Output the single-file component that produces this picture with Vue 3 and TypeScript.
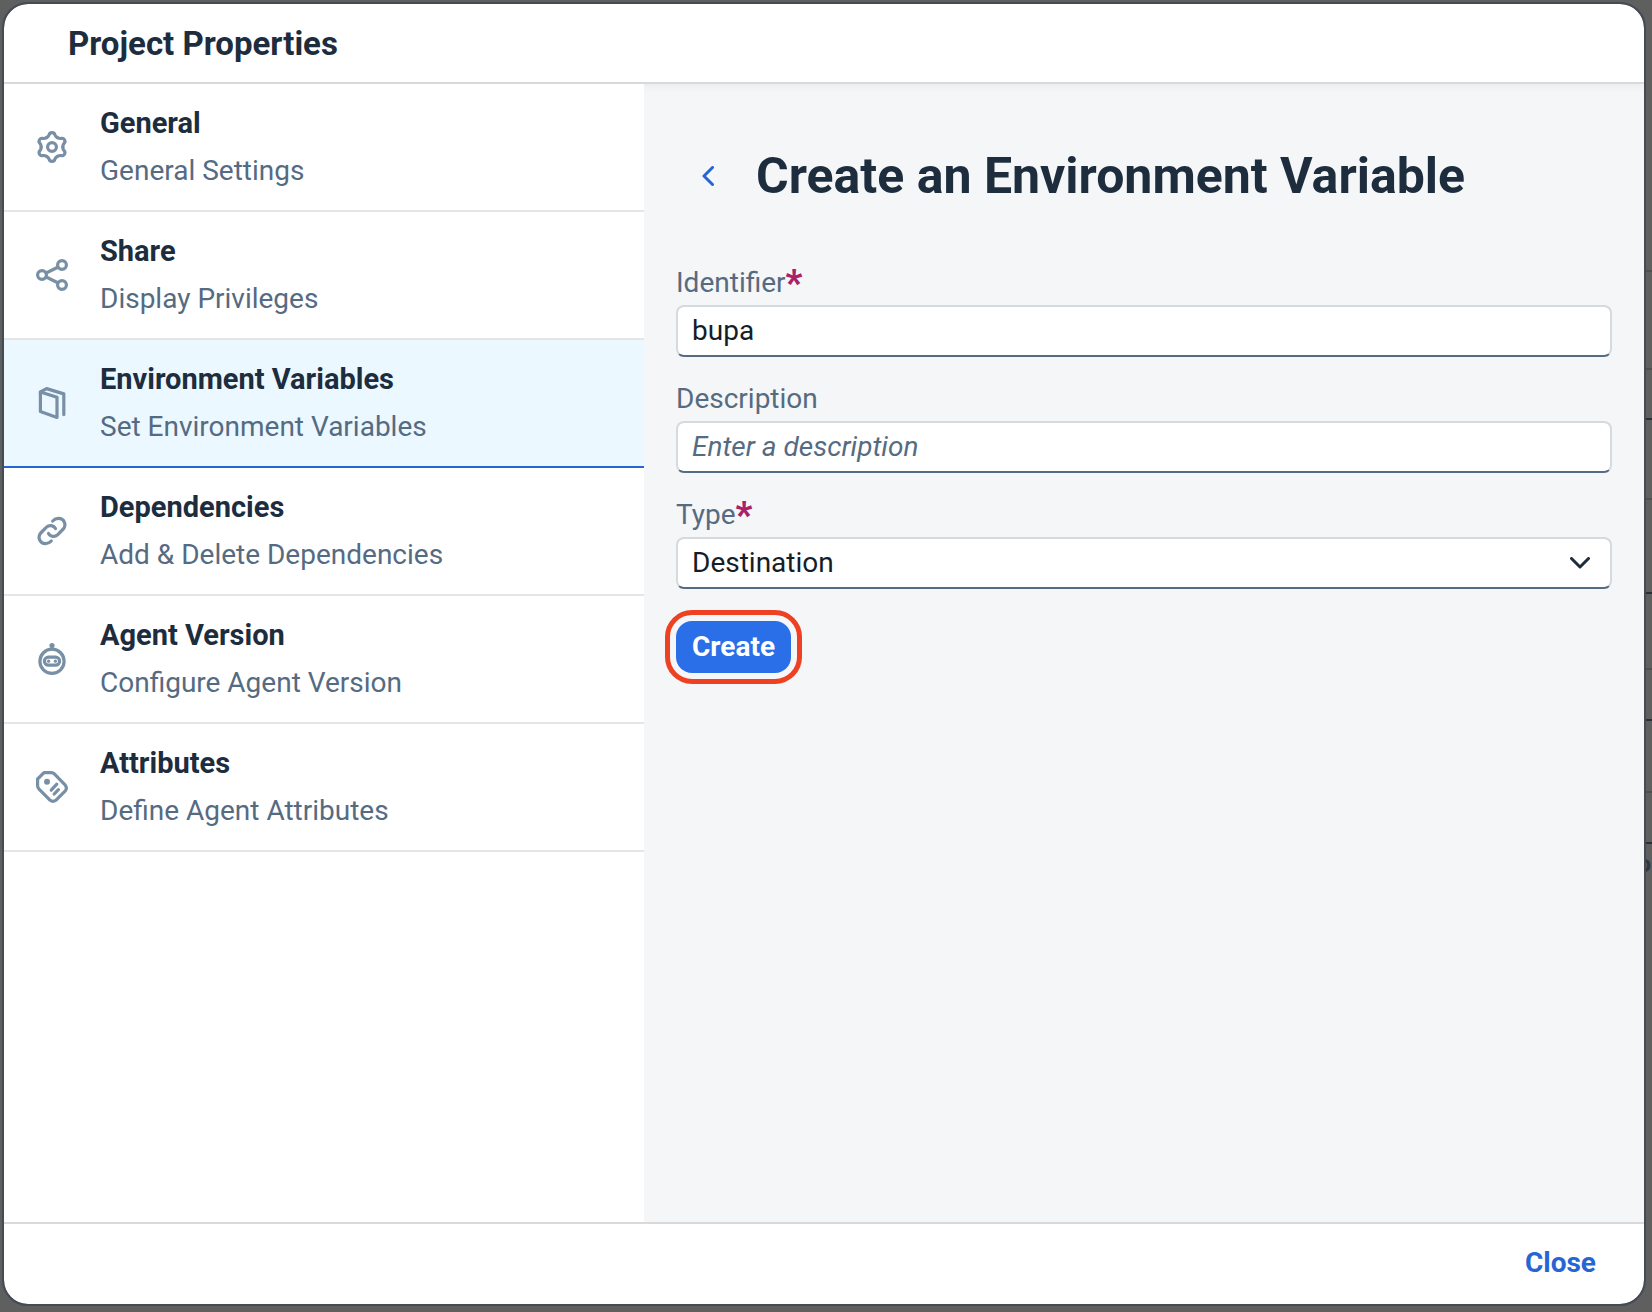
<script setup lang="ts">
import { ref } from 'vue'

interface Section {
  id: string
  title: string
  subtitle: string
}

interface Block {
  height: number
  dark: boolean
}

const sections: Section[] = [
  { id: 'general', title: 'General', subtitle: 'General Settings' },
  { id: 'share', title: 'Share', subtitle: 'Display Privileges' },
  { id: 'environment', title: 'Environment Variables', subtitle: 'Set Environment Variables' },
  { id: 'dependencies', title: 'Dependencies', subtitle: 'Add & Delete Dependencies' },
  { id: 'agent', title: 'Agent Version', subtitle: 'Configure Agent Version' },
  { id: 'attributes', title: 'Attributes', subtitle: 'Define Agent Attributes' },
]

// Panels of the page that stays dimmed behind the dialog
const blocks: Block[] = [
  { height: 272, dark: false },
  { height: 98, dark: false },
  { height: 50, dark: true },
  { height: 80, dark: false },
  { height: 94, dark: true },
  { height: 76, dark: false },
  { height: 51, dark: true },
  { height: 72, dark: false },
  { height: 51, dark: true },
]

const gearTurns = [0, 60, 120, 180, 240, 300]
const selected = ref('environment')
const identifier = ref('bupa')
const description = ref('')
const type = ref('Destination')
</script>

<template>
  <div class="screen">
    <div class="underlay" aria-hidden="true">
      <div
        v-for="(b, i) in blocks"
        :key="i"
        class="block"
        :class="{ dark: b.dark }"
        :style="{ height: b.height + 'px' }"
      ></div>
      <div class="behind">o</div>
    </div>

    <section class="dialog" role="dialog" aria-labelledby="dialog-title">
      <header class="dialog-header">
        <h1 id="dialog-title">Project Properties</h1>
      </header>

      <div class="dialog-body">
        <nav class="sections">
          <button
            v-for="s in sections"
            :key="s.id"
            type="button"
            class="section"
            :class="{ selected: s.id === selected }"
            @click="selected = s.id"
          >
            <svg class="icon" viewBox="0 0 32 32" aria-hidden="true">
              <g v-if="s.id === 'general'">
                <path
                  v-for="turn in gearTurns"
                  :key="turn"
                  :transform="`rotate(${turn} 16 16)`"
                  d="M10.6 6.65C12 5.8 12.8 5.2 13.2 3.6C13.6 2 14.2 1.6 16 1.6C17.8 1.6 18.4 2 18.8 3.6C19.2 5.2 20 5.8 21.4 6.65"
                />
                <circle cx="16" cy="16" r="4.4" />
              </g>
              <g v-else-if="s.id === 'share'">
                <circle cx="6" cy="16" r="4.4" />
                <circle cx="26" cy="6" r="4.4" />
                <circle cx="26" cy="26" r="4.4" />
                <path d="M10.2 14L21.8 8.2M10.2 18L21.8 23.8" />
              </g>
              <g v-else-if="s.id === 'environment'">
                <path d="M4.4 5L21 10.3V30.4L4.4 24.6Z" />
                <path d="M4.4 5L10.6 1.6L27.8 6.9V27.6" />
              </g>
              <g v-else-if="s.id === 'dependencies'">
                <path d="M19.5 13.5C17.5 10 13 9.8 10.5 12.2L5.2 17.5C1 21.8 3.5 28.6 9.6 28.6C12 28.6 14 27.4 15.3 26" />
                <path d="M12.5 18.5C14.5 22 19 22.2 21.5 19.8L26.8 14.5C31 10.2 28.5 3.4 22.4 3.4C20 3.4 18 4.6 16.7 6" />
              </g>
              <g v-else-if="s.id === 'agent'">
                <circle cx="16" cy="18.3" r="12.1" />
                <rect x="8.4" y="14.2" width="15.2" height="8" rx="4" />
                <circle class="solid" cx="16" cy="2.6" r="2.6" />
                <circle class="solid" cx="12.6" cy="18.2" r="1.6" />
                <circle class="solid" cx="19.4" cy="18.2" r="1.6" />
              </g>
              <g v-else>
                <path d="M8 1.6H15.4Q17 1.6 18.1 2.7L29.3 14.2Q31.4 17 29.3 19.8L19.8 29.3Q17 31.4 14.2 29.3L2.8 17.8Q1.6 16.4 1.6 14.8V8Z" />
                <path d="M20.8 13.2L15.2 19.2M22.4 18.6L18.2 23" />
                <circle class="solid" cx="11" cy="10.8" r="3" />
              </g>
            </svg>
            <span class="section-text">
              <span class="section-title">{{ s.title }}</span>
              <span class="section-subtitle">{{ s.subtitle }}</span>
            </span>
          </button>
        </nav>

        <main class="detail">
          <div class="detail-heading">
            <button type="button" class="back" aria-label="Back">
              <svg viewBox="0 0 12 20" aria-hidden="true"><path d="M10.5 1.5L2 10L10.5 18.5" /></svg>
            </button>
            <h2>Create an Environment Variable</h2>
          </div>

          <form @submit.prevent>
            <div class="field">
              <label for="identifier">Identifier<span class="required">*</span></label>
              <input id="identifier" v-model="identifier" type="text" required />
            </div>
            <div class="field">
              <label for="description">Description</label>
              <input id="description" v-model="description" type="text" placeholder="Enter a description" />
            </div>
            <div class="field">
              <label for="type">Type<span class="required">*</span></label>
              <div class="select">
                <select id="type" v-model="type" required>
                  <option>Destination</option>
                </select>
                <svg viewBox="0 0 20 12" aria-hidden="true"><path d="M1.5 1.5L10 10L18.5 1.5" /></svg>
              </div>
            </div>
            <button type="submit" class="create">Create</button>
          </form>
        </main>
      </div>

      <footer class="dialog-footer">
        <button type="button" class="close">Close</button>
      </footer>
    </section>
  </div>
</template>

<style>
body {
  margin: 0;
  background: #5f5f60;
}
</style>

<style scoped>
.screen,
.screen * {
  box-sizing: border-box;
}

.screen {
  position: relative;
  display: flex;
  min-height: 100vh;
  padding: 4px 8px 8px 4px;
  overflow: hidden;
  background: #5f5f60;
  color: #1d2d3e;
  font-family: Roboto, 'Liberation Sans', sans-serif;
  font-size: 28px;
}

button,
input,
select {
  margin: 0;
  font: inherit;
}

h1,
h2 {
  margin: 0;
  font-weight: 700;
}

.underlay {
  position: absolute;
  top: 0;
  right: 0;
  width: 50%;
}

.block {
  border-bottom: 2px solid #4f4f51;
}

.block.dark {
  border-bottom-color: #2a2f38;
}

.behind {
  padding-right: 1px;
  color: #2f3946;
  font-size: 24px;
  font-weight: 700;
  line-height: 40px;
  text-align: right;
}

.dialog {
  position: relative;
  display: flex;
  flex: 1;
  flex-direction: column;
  min-width: 0;
  overflow: hidden;
  border-radius: 24px;
  outline: 2px solid #444b56;
  background: #fff;
}

.dialog-header {
  position: relative;
  padding: 16px 64px 14px;
  border-bottom: 2px solid #d9d9d9;
  box-shadow: 0 2px 8px #0000000d;
}

.dialog-header h1 {
  font-size: 33px;
  line-height: 48px;
}

.dialog-body {
  display: flex;
  flex: 1;
}

.sections {
  position: relative;
  flex: 0 0 640px;
  background: #fff;
}

.section {
  display: flex;
  align-items: center;
  gap: 32px;
  width: 100%;
  padding: 15px 32px;
  border: 0;
  border-bottom: 2px solid #e5e5e5;
  background: #fff;
  color: #1d2d3e;
  text-align: left;
}

.section.selected {
  border-bottom-color: #2566d4;
  background: #ebf8ff;
}

.icon {
  flex: none;
  width: 32px;
  height: 32px;
  fill: none;
  stroke: #788fa6;
  stroke-width: 3.2;
  stroke-linecap: round;
  stroke-linejoin: round;
}

.icon .solid {
  fill: #788fa6;
  stroke: none;
}

.section-text {
  display: flex;
  flex-direction: column;
  line-height: 48px;
}

.section-title {
  font-size: 29px;
  font-weight: 700;
}

.section-subtitle {
  color: #556b82;
}

.detail {
  flex: 1;
  min-width: 0;
  padding: 64px 32px;
  background: #f5f6f7;
}

.detail-heading {
  display: flex;
  align-items: center;
  gap: 16px;
  margin-bottom: 61px;
}

.detail-heading h2 {
  font-size: 50px;
  line-height: 56px;
}

.back {
  display: flex;
  align-items: center;
  justify-content: center;
  width: 64px;
  height: 52px;
  padding: 0;
  border: 0;
  background: none;
}

.back svg {
  width: 12px;
  height: 20px;
  fill: none;
  stroke: #2566d4;
  stroke-width: 3;
  stroke-linecap: round;
  stroke-linejoin: round;
}

.field {
  display: flex;
  flex-direction: column;
  gap: 4px;
  margin-bottom: 24px;
}

.field label {
  color: #556b82;
  line-height: 36px;
}

.required {
  color: #aa2167;
  font-size: 36px;
  font-weight: 900;
  line-height: 28px;
  vertical-align: -3px;
}

.field input,
.field select {
  display: block;
  width: 100%;
  height: 52px;
  padding: 0 14px 2px;
  border: 2px solid #d5dadf;
  border-bottom-color: #556b82;
  border-radius: 8px;
  outline: 0;
  background: #fff;
  color: #131e29;
}

.field input::placeholder {
  color: #556b82;
  font-style: italic;
  opacity: 1;
}

.field select {
  appearance: none;
}

.select {
  position: relative;
}

.select svg {
  position: absolute;
  top: 20px;
  right: 22px;
  width: 20px;
  height: 12px;
  fill: none;
  stroke: #1d2d3e;
  stroke-width: 3;
  stroke-linecap: round;
  stroke-linejoin: round;
  pointer-events: none;
}

.create {
  height: 52px;
  margin-top: 8px;
  padding: 0 16px 2px;
  border: 0;
  border-radius: 16px;
  outline: 5px solid #ee4023;
  outline-offset: 6px;
  background: #2a6fe8;
  color: #fff;
  font-weight: 700;
}

.dialog-footer {
  display: flex;
  justify-content: flex-end;
  padding: 12px 32px 16px;
  border-top: 2px solid #d9d9d9;
}

.close {
  height: 52px;
  padding: 0 16px;
  border: 0;
  background: none;
  color: #2566d4;
  font-weight: 700;
}
</style>
